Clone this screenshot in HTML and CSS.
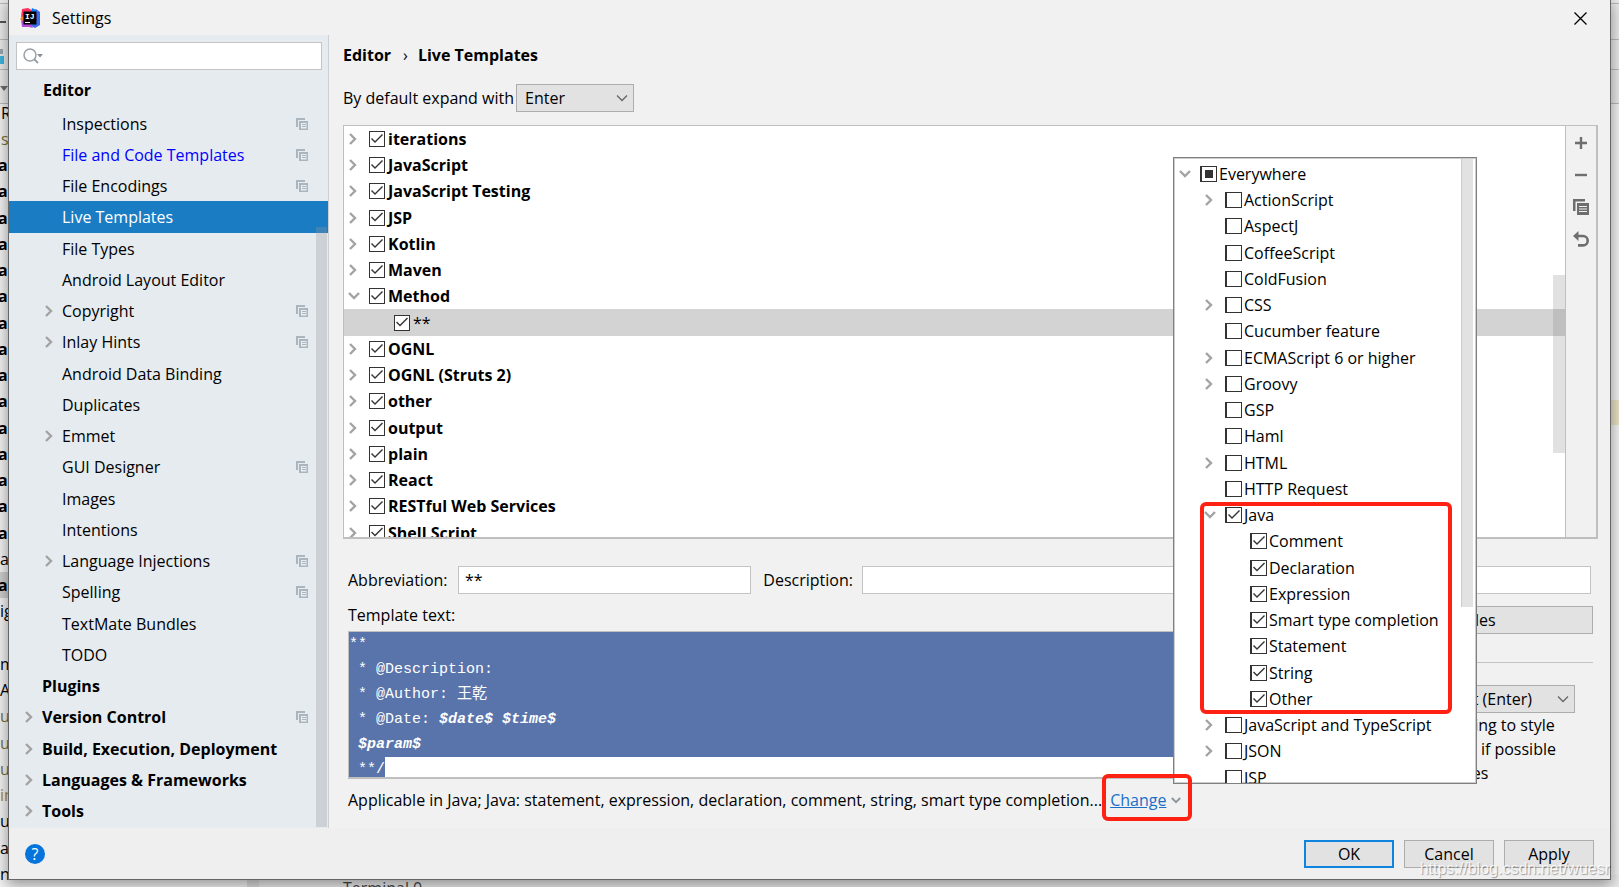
FILE: index.html
```html
<!DOCTYPE html>
<html lang="en">
<head>
<meta charset="utf-8">
<title>Settings</title>
<link rel="stylesheet" href="styles.css">
</head>
<body>
<svg class="defs" aria-hidden="true">
  <symbol id="right" viewBox="0 0 8 12"><path d="M1 1l5 5-5 5" fill="none" stroke="currentColor" stroke-width="2.4"/></symbol>
  <symbol id="down" viewBox="0 0 12 8"><path d="M1 1l5 5 5-5" fill="none" stroke="currentColor" stroke-width="2.4"/></symbol>
  <symbol id="thin-down" viewBox="0 0 12 8"><path d="M1 1.5l5 5 5-5" fill="none" stroke="currentColor" stroke-width="1.3"/></symbol>
  <symbol id="project" viewBox="0 0 12 12"><path d="M0 0h9v2H2v7H0z" fill="#aab5bd"/><path d="M3 3h9v9H3z" fill="#aab5bd"/><path d="M5 5h5.500v5.500H5z" fill="#e9eef2"/><path d="M6 6.500h4M6 8.500h4" stroke="#aab5bd"/></symbol>
</svg>

<div class="ide" aria-hidden="true">
  <div class="ide-bars"><i></i><i></i><i></i><i></i></div>
  <svg class="ide-glyphs" width="9" height="100" viewBox="0 0 9 100"><path d="M0 22h6" stroke="#555" stroke-width="2"/><path d="M0 49h3v5H0z" fill="#9aa7b0"/><path d="M0 56h4v8H0z" fill="#40b6e0"/><path d="M0 86h8l-4 5z" fill="#6e6e6e"/></svg>
  <div class="ide-list">
    <span class="pad">R</span><span class="pad olive">s</span>
    <b>ar</b><b>ar</b><b>ar</b><b>ar</b><b>ar</b><b>ar</b><b>ar</b><b>ar</b><b>ar</b><b>ar</b><b>ar</b><b>ar</b><b>ar</b><b>ar</b><b>ar</b>
    <span>ar</span><b class="current">ar</b><span>ig</span><span></span><span>m</span><span>AD</span>
    <span class="olive">u</span><span class="olive">u</span><span class="olive">u</span><span class="gold">in</span><span>us</span><span>al</span><span>nes and Consoles</span>
  </div>
  <div class="ide-bottom"><span>Terminal 0</span></div>
  <div class="ide-mark"></div>
</div>

<main class="dialog" role="dialog" aria-label="Settings">
  <header class="titlebar">
    <svg width="20" height="20" viewBox="0 0 20 20"><path d="M2 1l6-1 5 3-6 8-6-2z" fill="#fe315d"/><path d="M0 11l4-4 3 5-2 3z" fill="#f97a12"/><path d="M13 3l3-2 4 3v13l-5 3-4-2z" fill="#3b6bea"/><path d="M1 12l9 3 3 5-4-1-7 0z" fill="#b24bd8"/><path d="M12 0l4 2-2 3-3-1z" fill="#087cfa"/><path d="M3.500 3.500h13v13h-13z" fill="#000"/><path d="M5 14.500h5" stroke="#fff" stroke-width="1"/><text x="5" y="11" class="logo-text">IJ</text></svg>
    <h1>Settings</h1>
    <button class="close" aria-label="Close"><svg width="13" height="13" viewBox="0 0 13 13"><path d="M.5.5l12 12M12.500.5l-12 12" stroke="#000" stroke-width="1.300"/></svg></button>
  </header>

  <div class="body">
    <aside class="sidebar">
      <label class="search">
        <svg width="20" height="16" viewBox="0 0 20 16"><circle cx="7" cy="7" r="6" fill="none" stroke="#9aa0a5" stroke-width="1.500"/><path d="M11 11l4 4" stroke="#9aa0a5" stroke-width="2"/><path d="M14 6h6l-3 3.500z" fill="#8a9096"/></svg>
        <input type="text" aria-label="Search settings">
      </label>
      <nav class="nav">
        <a href="#" class="top head">Editor</a>
        <a href="#">Inspections<svg class="proj"><use href="#project"/></svg></a>
        <a href="#" class="changed">File and Code Templates<svg class="proj"><use href="#project"/></svg></a>
        <a href="#">File Encodings<svg class="proj"><use href="#project"/></svg></a>
        <a href="#" class="selected" aria-current="page">Live Templates</a>
        <a href="#">File Types</a>
        <a href="#">Android Layout Editor</a>
        <a href="#"><svg class="arrow"><use href="#right"/></svg>Copyright<svg class="proj"><use href="#project"/></svg></a>
        <a href="#"><svg class="arrow"><use href="#right"/></svg>Inlay Hints<svg class="proj"><use href="#project"/></svg></a>
        <a href="#">Android Data Binding</a>
        <a href="#">Duplicates</a>
        <a href="#"><svg class="arrow"><use href="#right"/></svg>Emmet</a>
        <a href="#">GUI Designer<svg class="proj"><use href="#project"/></svg></a>
        <a href="#">Images</a>
        <a href="#">Intentions</a>
        <a href="#"><svg class="arrow"><use href="#right"/></svg>Language Injections<svg class="proj"><use href="#project"/></svg></a>
        <a href="#">Spelling<svg class="proj"><use href="#project"/></svg></a>
        <a href="#">TextMate Bundles</a>
        <a href="#">TODO</a>
        <a href="#" class="top">Plugins</a>
        <a href="#" class="top"><svg class="arrow"><use href="#right"/></svg>Version Control<svg class="proj"><use href="#project"/></svg></a>
        <a href="#" class="top"><svg class="arrow"><use href="#right"/></svg>Build, Execution, Deployment</a>
        <a href="#" class="top"><svg class="arrow"><use href="#right"/></svg>Languages &amp; Frameworks</a>
        <a href="#" class="top"><svg class="arrow"><use href="#right"/></svg>Tools</a>
        <span class="side-thumb"></span>
      </nav>
    </aside>

    <section class="content">
      <h2 class="crumbs"><span>Editor</span><span class="sep">›</span><span>Live Templates</span></h2>
      <div class="expand">
        <label for="expand">By default expand with</label>
        <span class="combo"><select id="expand"><option>Enter</option></select><svg><use href="#thin-down"/></svg></span>
      </div>

      <div class="panel">
        <div class="tree groups">
          <div class="row"><svg class="arrow"><use href="#right"/></svg><label><input type="checkbox" checked>iterations</label></div>
          <div class="row"><svg class="arrow"><use href="#right"/></svg><label><input type="checkbox" checked>JavaScript</label></div>
          <div class="row"><svg class="arrow"><use href="#right"/></svg><label><input type="checkbox" checked>JavaScript Testing</label></div>
          <div class="row"><svg class="arrow"><use href="#right"/></svg><label><input type="checkbox" checked>JSP</label></div>
          <div class="row"><svg class="arrow"><use href="#right"/></svg><label><input type="checkbox" checked>Kotlin</label></div>
          <div class="row"><svg class="arrow"><use href="#right"/></svg><label><input type="checkbox" checked>Maven</label></div>
          <div class="row"><svg class="arrow open"><use href="#down"/></svg><label><input type="checkbox" checked>Method</label></div>
          <div class="row child picked"><label><input type="checkbox" checked>**</label></div>
          <div class="row"><svg class="arrow"><use href="#right"/></svg><label><input type="checkbox" checked>OGNL</label></div>
          <div class="row"><svg class="arrow"><use href="#right"/></svg><label><input type="checkbox" checked>OGNL (Struts 2)</label></div>
          <div class="row"><svg class="arrow"><use href="#right"/></svg><label><input type="checkbox" checked>other</label></div>
          <div class="row"><svg class="arrow"><use href="#right"/></svg><label><input type="checkbox" checked>output</label></div>
          <div class="row"><svg class="arrow"><use href="#right"/></svg><label><input type="checkbox" checked>plain</label></div>
          <div class="row"><svg class="arrow"><use href="#right"/></svg><label><input type="checkbox" checked>React</label></div>
          <div class="row"><svg class="arrow"><use href="#right"/></svg><label><input type="checkbox" checked>RESTful Web Services</label></div>
          <div class="row"><svg class="arrow"><use href="#right"/></svg><label><input type="checkbox" checked>Shell Script</label></div>
          <span class="tree-thumb"></span>
        </div>
        <div class="tools">
          <button aria-label="Add"><svg width="16" height="16" viewBox="0 0 16 16"><path d="M8 2v12M2 8h12" stroke="#6e6e6e" stroke-width="2.400"/></svg></button>
          <button aria-label="Remove"><svg width="16" height="16" viewBox="0 0 16 16"><path d="M2 8h12" stroke="#6e6e6e" stroke-width="2.400"/></svg></button>
          <button aria-label="Duplicate"><svg width="16" height="16" viewBox="0 0 16 16"><path d="M0 0h12v2.500H2.500V12H0z" fill="#6e6e6e"/><path d="M4 4h12v12H4z" fill="#6e6e6e"/><path d="M6 7.500h8M6 10h8M6 12.500h8" stroke="#f1f1f1"/></svg></button>
          <button aria-label="Revert"><svg width="16" height="16" viewBox="0 0 16 16"><path d="M3 5h7a4.700 4.700 0 0 1 0 9.400H5" fill="none" stroke="#6e6e6e" stroke-width="2.600"/><path d="M0 5l5.500-5v10z" fill="#6e6e6e"/></svg></button>
        </div>
      </div>

      <div class="fields">
        <label for="abbr">Abbreviation:</label><input id="abbr" type="text" value="**">
        <label for="desc" class="desc">Description:</label><input id="desc" type="text">
      </div>

      <div class="lower">
        <div class="template">
          <span class="caption" id="tpl">Template text:</span>
          <div class="code" role="textbox" aria-multiline="true" aria-labelledby="tpl" contenteditable="true" spellcheck="false"><div>**</div><div> * @Description:</div><div> * @Author: 王乾</div><div> * @Date: <b>$date$</b> <b>$time$</b></div><div> <b>$param$</b></div><div class="last"> **/</div></div>
        </div>
        <div class="options">
          <button class="btn">Edit variables</button>
          <div class="legend"><span>Options</span><hr></div>
          <div class="expand-opt"><label for="with">Expand with</label><span class="combo wide"><select id="with"><option>Default (Enter)</option></select><svg><use href="#thin-down"/></svg></span></div>
          <label><input type="checkbox">Reformat according to style</label>
          <label><input type="checkbox">Use static import if possible</label>
          <label><input type="checkbox" checked>Shorten FQ names</label>
        </div>
      </div>
      <div class="applicable">
        <span>Applicable in Java; Java: statement, expression, declaration, comment, string, smart type completion...</span>
        <span class="change"><a href="#">Change</a><svg><use href="#down"/></svg></span>
      </div>
    </section>
  </div>

  <footer class="footer">
    <button class="help" aria-label="Help">?</button>
    <button class="btn ok">OK</button>
    <button class="btn">Cancel</button>
    <button class="btn">Apply</button>
  </footer>

  <div class="popup">
    <div class="tree">
      <div class="row"><svg class="arrow open"><use href="#down"/></svg><label><input type="checkbox" class="mixed">Everywhere</label></div>
      <div class="row l1"><svg class="arrow"><use href="#right"/></svg><label><input type="checkbox">ActionScript</label></div>
      <div class="row l1"><label><input type="checkbox">AspectJ</label></div>
      <div class="row l1"><label><input type="checkbox">CoffeeScript</label></div>
      <div class="row l1"><label><input type="checkbox">ColdFusion</label></div>
      <div class="row l1"><svg class="arrow"><use href="#right"/></svg><label><input type="checkbox">CSS</label></div>
      <div class="row l1"><label><input type="checkbox">Cucumber feature</label></div>
      <div class="row l1"><svg class="arrow"><use href="#right"/></svg><label><input type="checkbox">ECMAScript 6 or higher</label></div>
      <div class="row l1"><svg class="arrow"><use href="#right"/></svg><label><input type="checkbox">Groovy</label></div>
      <div class="row l1"><label><input type="checkbox">GSP</label></div>
      <div class="row l1"><label><input type="checkbox">Haml</label></div>
      <div class="row l1"><svg class="arrow"><use href="#right"/></svg><label><input type="checkbox">HTML</label></div>
      <div class="row l1"><label><input type="checkbox">HTTP Request</label></div>
      <div class="java">
        <div class="row l1"><svg class="arrow open"><use href="#down"/></svg><label><input type="checkbox" checked>Java</label></div>
        <div class="row l2"><label><input type="checkbox" checked>Comment</label></div>
        <div class="row l2"><label><input type="checkbox" checked>Declaration</label></div>
        <div class="row l2"><label><input type="checkbox" checked>Expression</label></div>
        <div class="row l2"><label><input type="checkbox" checked>Smart type completion</label></div>
        <div class="row l2"><label><input type="checkbox" checked>Statement</label></div>
        <div class="row l2"><label><input type="checkbox" checked>String</label></div>
        <div class="row l2"><label><input type="checkbox" checked>Other</label></div>
      </div>
      <div class="row l1"><svg class="arrow"><use href="#right"/></svg><label><input type="checkbox">JavaScript and TypeScript</label></div>
      <div class="row l1"><svg class="arrow"><use href="#right"/></svg><label><input type="checkbox">JSON</label></div>
      <div class="row l1"><label><input type="checkbox">JSP</label></div>
    </div>
    <span class="popup-thumb"></span>
  </div>
</main>
<div class="watermark">https://blog.csdn.net/wuesr</div>
</body>
</html>
```
FILE: styles.css
```css
* { box-sizing: border-box; }
html, body { height: 100%; }
body {
  margin: 0;
  position: relative;
  overflow: hidden;
  background: #fff;
  color: #000;
  font: 16px/24px "Open Sans", "Noto Sans", "Noto Sans CJK SC", sans-serif;
}
h1, h2 { margin: 0; font-size: 16px; }
a { color: inherit; text-decoration: none; }
input, select, button { font: inherit; color: inherit; margin: 0; }
button { padding: 0; border: 0; background: none; }
svg { display: block; flex: none; }
.defs { position: absolute; width: 0; height: 0; }

/* window behind the dialog */
.ide { position: absolute; inset: 0; overflow: hidden; background: #f4f4f4; }
.ide-bars {
  display: grid;
  grid-template-rows: 4px 36px 30px 34px;
  background: #ececec;
}
.ide-bars i { border-bottom: 1px solid #bbb; }
.ide-glyphs { position: absolute; left: 0; top: 0; }
.ide-list {
  position: absolute;
  left: 0;
  top: 100px;
  width: 247px;
  display: grid;
  grid-auto-rows: 26px 26px 26px 27px;
  line-height: 26px;
  white-space: nowrap;
}
.ide-list b { text-indent: -2px; }
.pad { padding-left: 1px; }
.olive { color: #77703a; }
.gold { color: #b08a20; }
.current { background: #d0d0d0; }
.ide-bottom {
  position: absolute;
  left: 247px;
  right: 0;
  bottom: 0;
  height: 12px;
  padding-left: 84px;
  overflow: hidden;
  border-left: 12px solid #ddd;
  background: #ececec;
  color: #444;
}
.ide-bottom span { display: block; line-height: 26px; }
.ide-mark { position: absolute; right: 0; top: 400px; width: 20px; height: 25px; background: #ece4c8; }

/* dialog */
.dialog {
  position: absolute;
  inset: 0 9px 8px;
  display: flex;
  flex-direction: column;
  background: #f1f1f1;
  box-shadow: 0 0 0 1px #666, 0 4px 14px 2px rgba(0, 0, 0, .4);
}
.titlebar {
  display: flex;
  align-items: center;
  gap: 12px;
  height: 35px;
  padding: 1px 22px 0 11px;
}
.titlebar h1 { flex: 1; font-weight: 400; }
.logo-text { font: bold 8px "Liberation Mono", monospace; fill: #fff; }
.close { width: 14px; }
.body { flex: 1; min-height: 0; display: flex; }

/* settings navigation */
.sidebar {
  flex: none;
  width: 320px;
  padding-top: 7px;
  display: flex;
  flex-direction: column;
  background: #e5ebef;
  border-right: 1px solid #ccd0d5;
}
.search {
  display: flex;
  align-items: center;
  height: 28px;
  margin: 0 6px 0 7px;
  padding-left: 6px;
  background: #fff;
  border: 1px solid #c4c4c4;
}
.search input { flex: 1; min-width: 0; border: 0; outline: 0; background: none; }
.nav {
  position: relative;
  flex: 1;
  min-height: 0;
  overflow: hidden;
  display: grid;
  grid-template-rows: 38px;
  grid-auto-rows: 31px 31px 31px 32px;
}
.nav a {
  position: relative;
  display: flex;
  align-items: center;
  padding-left: 53px;
}
.nav .top { padding-left: 33px; font-weight: 700; }
.nav .head { padding-left: 34px; padding-top: 2px; }
.nav .changed { color: #00f; }
.nav .selected { background: #1a7dc4; color: #fff; }
.nav .arrow { margin-left: -17px; margin-right: 9px; }
.proj { position: absolute; right: 20px; width: 12px; height: 12px; }
.side-thumb {
  position: absolute;
  right: 1px;
  top: 157px;
  bottom: 1px;
  width: 11px;
  background: rgba(150, 150, 155, .3);
}
.arrow { width: 8px; height: 12px; color: #a3a3a3; }
.arrow.open { width: 12px; height: 8px; }

/* page */
.content {
  flex: 1;
  min-width: 0;
  padding: 0 12px 0 14px;
  display: flex;
  flex-direction: column;
}
.crumbs { display: flex; padding-top: 8px; line-height: 24px; }
.crumbs .sep { padding: 0 10px 0 12px; font-weight: 400; }
.expand { display: flex; align-items: center; gap: 2px; padding: 17px 0 13px; }
.combo { position: relative; display: flex; width: 118px; }
.combo select {
  appearance: none;
  width: 100%;
  height: 28px;
  padding: 0 8px;
  border: 1px solid #adadad;
  border-radius: 0;
  background: #e2e2e2;
}
.combo svg {
  position: absolute;
  right: 6px;
  top: 10px;
  width: 12px;
  height: 8px;
  color: #666;
  pointer-events: none;
}
.panel {
  flex: 1;
  min-height: 0;
  display: flex;
  border: 1px solid #bfbfbf;
  border-width: 1px 2px 2px 1px;
}
.tree {
  position: relative;
  flex: 1;
  min-width: 0;
  overflow: hidden;
  display: grid;
  grid-auto-rows: 26px 26px 26px 27px;
  background: #fff;
}
.groups { font-weight: 700; }
.row { display: flex; align-items: center; padding-left: 25px; }
.row .arrow { width: 8px; margin: 0 12px 0 -20px; }
.row .arrow.open { width: 12px; margin: 0 9px 0 -21px; }
.row label, .options > label { display: flex; align-items: center; gap: 3px; white-space: nowrap; }
.child { padding-left: 50px; font-weight: 400; }
.picked { background: #d3d3d3; }
.tree-thumb {
  position: absolute;
  right: 0;
  top: 149px;
  width: 12px;
  height: 178px;
  background: rgba(130, 130, 130, .24);
}
input[type="checkbox"] {
  appearance: none;
  flex: none;
  width: 16px;
  height: 16px;
  border: 1px solid #333;
  background: #fff;
}
input[type="checkbox"]:checked::before {
  content: "";
  display: block;
  width: 14px;
  height: 14px;
  background: #333;
  clip-path: polygon(1px 7px, 2px 6px, 5px 9px, 12px 2px, 13px 3px, 5px 11px);
}
input.mixed { padding: 3px; }
input.mixed::before { content: ""; display: block; height: 8px; background: #333; }
.tools {
  flex: none;
  width: 31px;
  padding-top: 1px;
  display: flex;
  flex-direction: column;
  border-left: 1px solid #bfbfbf;
}
.tools button { height: 32px; display: grid; place-items: center; }

.fields {
  display: flex;
  align-items: center;
  padding: 27px 7px 0 5px;
}
.fields input {
  flex: 279;
  min-width: 0;
  height: 28px;
  padding: 0 6px;
  border: 1px solid #c4c4c4;
  background: #fff;
}
.fields #desc { flex: 714; }
.fields label { width: 110px; }
.fields .desc { width: 99px; margin-left: 12px; }
.lower { display: flex; gap: 22px; padding: 0 5px; }
.template { flex: 1; min-width: 0; }
.caption { display: block; padding: 9px 0 4px; }
.code {
  height: 148px;
  overflow: hidden;
  border: 1px solid #bfbfbf;
  border-bottom-width: 2px;
  background: #fff;
  color: #fff;
  font: 15px/25px "Liberation Mono", "Noto Sans CJK SC", monospace;
  white-space: pre;
}
.code div { height: 25px; background: #5974ab; }
.code .last { width: max-content; }
.code b { font-style: italic; }
.options { flex: none; width: 294px; padding-top: 12px; }
.options > label { padding-left: 32px; height: 24px; }
.btn {
  height: 28px;
  border: 1px solid #adadad;
  background: #e2e2e2;
}
.options .btn { width: 100%; }
.legend { display: flex; align-items: center; gap: 8px; height: 56px; }
.legend hr { flex: 1; margin: 0; border: 0; border-top: 1px solid #c4c4c4; }
.expand-opt { display: flex; justify-content: space-between; align-items: center; padding: 0 18px 0 0; margin-top: -5px; }
.combo.wide { width: 164px; }
.combo.wide select { padding-left: 12px; }
.applicable {
  height: 49px;
  margin-top: -6px;
  padding: 0 0 7px 5px;
  display: flex;
  align-items: center;
  gap: 8px;
  white-space: nowrap;
}
.change { position: relative; z-index: 1; display: flex; align-items: center; gap: 5px; color: #1a6fc9; }
.change a { text-decoration: underline; }
.change svg { width: 10px; height: 7px; color: #8f979d; }
.change::after {
  content: "";
  position: absolute;
  inset: -14px -11px -9px -8px;
  border: 4px solid #ff2213;
  border-radius: 6px;
  pointer-events: none;
}

.footer {
  flex: none;
  height: 51px;
  padding: 0 16px;
  display: flex;
  align-items: center;
  gap: 10px;
  background: #efefef;
}
.footer .btn { width: 90px; }
.footer .ok { border: 2px solid #0f85df; }
.help {
  width: 20px;
  height: 20px;
  margin-right: auto;
  border-radius: 50%;
  background: #0574dd;
  color: #fff;
  line-height: 20px;
}

/* context chooser */
.popup {
  position: absolute;
  top: 157px;
  right: 133px;
  bottom: 95px;
  width: 304px;
  padding: 3px 0 0;
  display: flex;
  background: #fff;
  border: 1px solid #808080;
  box-shadow: inset 0 0 0 1px #ccc;
  overflow: hidden;
}
.popup .tree { background: none; }
.popup .row { padding-left: 26px; }
.popup .l1 { padding-left: 51px; }
.popup .l2 { padding-left: 76px; }
.popup label { gap: 2px; }
.popup input[type="checkbox"] { width: 17px; border-left-width: 2px; }
.java {
  position: relative;
  grid-row: span 8;
  display: grid;
  grid-template-rows: subgrid;
}
.java::after {
  content: "";
  position: absolute;
  inset: 0 24px -2px 26px;
  border: 4px solid #ff2213;
  border-radius: 6px;
  pointer-events: none;
}
.popup-thumb {
  position: absolute;
  top: 1px;
  right: 3px;
  width: 12px;
  height: 448px;
  background: #e2e2e2;
  border-left: 1px solid #ccc;
}
.watermark {
  position: absolute;
  right: 9px;
  bottom: 8px;
  font: 16px/20px "Liberation Sans", sans-serif;
  color: rgba(255, 255, 255, .85);
  text-shadow: 1px 1px 1px rgba(0, 0, 0, .35);
}
```
